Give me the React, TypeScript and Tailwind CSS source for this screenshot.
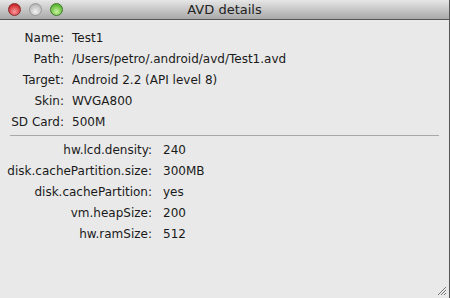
import React from 'react';

const basic: [string, string][] = [
  ['Name:', 'Test1'],
  ['Path:', '/Users/petro/.android/avd/Test1.avd'],
  ['Target:', 'Android 2.2 (API level 8)'],
  ['Skin:', 'WVGA800'],
  ['SD Card:', '500M'],
];

const props: [string, string][] = [
  ['hw.lcd.density:', '240'],
  ['disk.cachePartition.size:', '300MB'],
  ['disk.cachePartition:', 'yes'],
  ['vm.heapSize:', '200'],
  ['hw.ramSize:', '512'],
];

const Light = ({ from, to, ring }: { from: string; to: string; ring: string }) => (
  <span
    className={`block w-[13px] h-[13px] rounded-full border ${ring}`}
    style={{ background: `radial-gradient(circle at 50% 70%, ${to} 0%, ${from} 75%)` }}
  />
);

export default function App() {
  return (
    <div
      className="w-[450px] h-[298px] flex flex-col bg-[#e9e9e9] text-[#1a1a1a] overflow-hidden border-r border-[#555] relative"
      style={{ fontFamily: '"DejaVu Sans", "Liberation Sans", sans-serif' }}
    >
      <div className="h-[20px] shrink-0 relative flex items-center bg-gradient-to-b from-[#e6e6e6] to-[#a9a9a9] border-b border-[#555]">
        <div className="flex items-center gap-[8px] pl-[8px]">
          <Light from="#c9272b" to="#ff9a9a" ring="border-[#8a2a2a]" />
          <Light from="#b8b8b8" to="#f2f2f2" ring="border-[#999]" />
          <Light from="#5ab330" to="#c8f5a0" ring="border-[#3f7c2a]" />
        </div>
        <div className="absolute inset-0 flex items-center justify-center text-[13px] text-[#222]">
          AVD details
        </div>
      </div>

      <div className="pt-[8px] text-[12px]">
        <div className="grid grid-cols-[64px_1fr] gap-x-[8px]">
          {basic.map(([k, v]) => (
            <React.Fragment key={k}>
              <div className="text-right h-[21px] leading-[21px]">{k}</div>
              <div className="h-[21px] leading-[21px]">{v}</div>
            </React.Fragment>
          ))}
        </div>
        <div className="mx-[10px] mt-[2px] mb-[4px] border-t border-[#a8a8a8]" />
        <div className="grid grid-cols-[152px_1fr] gap-x-[11px]">
          {props.map(([k, v]) => (
            <React.Fragment key={k}>
              <div className="text-right h-[21px] leading-[21px]">{k}</div>
              <div className="h-[21px] leading-[21px]">{v}</div>
            </React.Fragment>
          ))}
        </div>
      </div>

      <svg className="absolute right-[2px] bottom-[2px]" width="12" height="12" viewBox="0 0 12 12">
        <path d="M11 3 L3 11 M11 6 L6 11 M11 9 L9 11" stroke="#777" strokeWidth="1" />
      </svg>
    </div>
  );
}
